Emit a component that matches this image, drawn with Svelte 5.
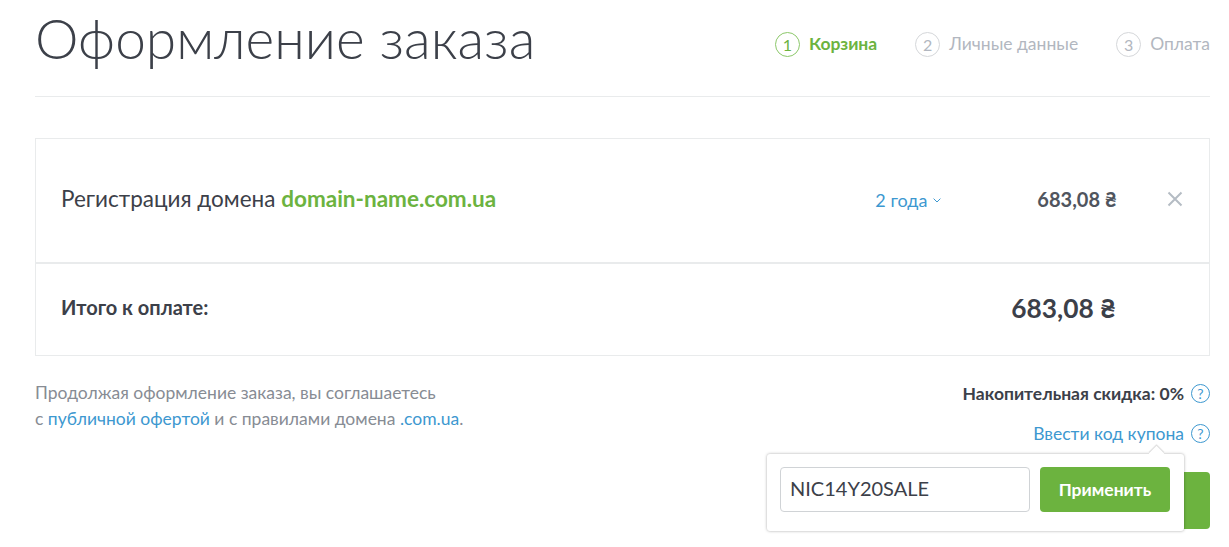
<script>
  const steps = [
    { n: 1, label: 'Корзина', active: true },
    { n: 2, label: 'Личные данные' },
    { n: 3, label: 'Оплата' }
  ];
</script>

<div class="page">
  <header class="head">
    <h1>Оформление заказа</h1>
    <ol class="steps">
      {#each steps as s}
        <li class="step" class:active={s.active}><span class="num">{s.n}</span><span class="lbl">{s.label}</span></li>
      {/each}
    </ol>
  </header>

  <section class="card">
    <div class="row item">
      <div class="name">Регистрация домена <a href="#d" class="dom">domain-name.com.ua</a></div>
      <a href="#p" class="period">2 года
        <svg class="chev" width="8" height="5" viewBox="0 0 8 5"><path d="M.6.6 4 4l3.4-3.4" fill="none" stroke="#3d98d0" stroke-width="1"/></svg>
      </a>
      <div class="price">683,08 ₴</div>
      <svg class="close" width="16" height="16" viewBox="0 0 16 16"><path d="M1.5 1.5l13 13M14.5 1.5l-13 13" stroke="#b5bcc4" stroke-width="2" fill="none"/></svg>
    </div>
    <div class="row total">
      <div class="tlabel">Итого к оплате:</div>
      <div class="tprice">683,08 ₴</div>
    </div>
  </section>

  <section class="foot">
    <p class="terms">Продолжая оформление заказа, вы соглашаетесь<br />с <a href="#o">публичной офертой</a> и с правилами домена <a href="#c">.com.ua</a>.</p>
    <div class="side">
      <div class="line disc">Накопительная скидка: 0% <span class="q">?</span></div>
      <div class="line coupon"><a href="#k">Ввести код купона</a> <span class="q">?</span></div>
      <div class="cta">
        <div class="pop">
          <input class="code" value="NIC14Y20SALE" />
          <button class="apply">Применить</button>
        </div>
      </div>
    </div>
  </section>
</div>

<style>
  :global(body) { margin: 0; background: #fff; overflow: hidden; }
  .page {
    width: 1175px; margin-left: 35px; height: 547px; overflow: hidden;
    font-family: Lato, "Noto Sans", sans-serif; color: #3c4049; font-size: 16px;
  }
  a { color: #3d98d0; text-decoration: none; }
  .head {
    height: 96px; border-bottom: 1px solid #e9ebec; display: flex;
    justify-content: space-between; align-items: flex-start;
  }
  h1 { margin: 5px 0 0; font-size: 55px; font-weight: 300; line-height: 66px; color: #3c4049; }
  .steps { list-style: none; margin: 32px 0 0; padding: 0; display: flex; gap: 38px; }
  .step { display: flex; align-items: center; gap: 9px; color: #b2b7c0; font-size: 17.5px; height: 25px; }
  .lbl { padding-bottom: 2px; }
  .num {
    width: 25px; height: 25px; box-sizing: border-box; flex: none; border: 1px solid #d5d7da; border-radius: 50%;
    display: flex; align-items: center; justify-content: center; font-size: 16px; padding-bottom: 1px;
  }
  .active { color: #6cb33f; font-weight: 700; }
  .active .num { border-color: #8cc86a; font-weight: 400; }
  .card { margin-top: 41px; border: 1px solid #e9ebec; }
  .row { display: flex; align-items: center; padding: 0 26px 0 25px; }
  .item { border-bottom: 2px solid #e9ebec; padding-bottom: 3px; height: 120px; }
  .name { font-size: 22.5px; flex: 1; padding-bottom: 2px; }
  .dom { color: #6cb33f; font-weight: 700; }
  .period { font-size: 18px; margin-right: 96px; display: flex; align-items: center; gap: 6px; padding-top: 1px; }
  .chev { margin-top: 2px; }
  .price { font-size: 20px; font-weight: 700; color: #50555e; }
  .close { margin: 0 0 0 50px; }
  .total { box-sizing: border-box; height: 91px; justify-content: space-between; padding-right: 93px; padding-bottom: 6px; }
  .tlabel { font-size: 20px; font-weight: 700; }
  .tprice { font-size: 26.3px; font-weight: 700; padding-top: 2px; }
  .foot { display: flex; justify-content: space-between; margin-top: 24px; }
  .terms { margin: 0; font-size: 17.5px; line-height: 26px; color: #878c94; }
  .side { display: flex; flex-direction: column; align-items: flex-end; }
  .line { display: flex; align-items: center; gap: 7px; height: 20px; font-size: 17.5px; }
  .disc { font-weight: 700; margin-top: 3px; }
  .coupon { margin-top: 20px; }
  .q {
    width: 19px; height: 19px; box-sizing: border-box; border: 1px solid #3d98d0; border-radius: 50%; color: #3d98d0;
    display: flex; align-items: center; justify-content: center; font-size: 14px; font-weight: 400;
  }
  .cta { position: relative; width: 120px; height: 57px; margin-top: 29px; background: #6cb33f; border-radius: 4px; }
  .pop {
    position: absolute; right: 26px; top: -18px; width: 417px; height: 77px; box-sizing: border-box;
    background: #fff; border-radius: 3px; box-shadow: 0 0 3px rgba(0,0,0,.35);
    display: flex; align-items: flex-start; gap: 10px; padding: 13px 13px 0;
  }
  .pop::before {
    content: ""; position: absolute; top: -6px; right: 22px; width: 11px; height: 11px;
    background: #fff; transform: rotate(45deg); box-shadow: -1px -1px 1px rgba(0,0,0,.14);
  }
  .code {
    width: 250px; height: 45px; box-sizing: border-box; border: 1px solid #d0d3d6; border-radius: 4px;
    padding: 0 9px 3px; font: 20px Lato, sans-serif; color: #3c4049; outline: none;
  }
  .apply {
    width: 130px; height: 45px; border: 0; border-radius: 4px; background: #6cb33f; color: #fff;
    font: 700 17.5px Lato, sans-serif; padding: 0;
  }
</style>
